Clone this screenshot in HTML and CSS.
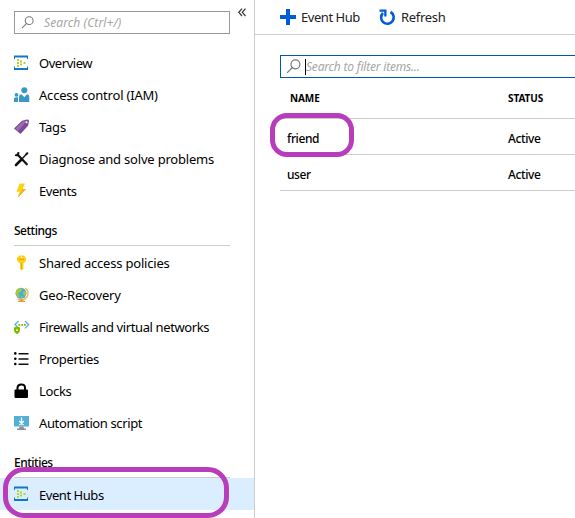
FILE: index.html
```html
<!DOCTYPE html>
<html lang="en">
<head>
<meta charset="utf-8">
<title>Event Hubs</title>
<link rel="stylesheet" href="styles.css">
</head>
<body>
<svg class="defs" width="0" height="0">
  <symbol id="hub" viewBox="0 0 16 16"><path fill="#1278c8" d="M0 .5h14v3.500h-1V2.500H1V4H0zM0 15h14v-3.500h-1V13H1v-1.500H0z"/><path fill="#b5d334" d="M3 4h2v2H3zM3 7h2v2H3zM3 10h2v2H3zM6 5.500h2v2H6zM6 8.500h2v2H6zM9.500 7h2v2h-2z"/></symbol>
  <symbol id="search" viewBox="0 0 14 14"><g fill="none" stroke="#777" stroke-width="1.100"><circle cx="8.800" cy="5" r="4.200"/><path d="M5.800 8.200 1 13"/></g></symbol>
</svg>
<div class="app">
  <aside class="sidebar">
    <div class="top">
      <div class="search"><svg class="glass" width="13" height="13"><use href="#search"/></svg><span class="t-search">Search (Ctrl+/)</span></div>
      <svg class="collapse" width="8" height="9" viewBox="0 0 8 9"><path d="M4 .7.800 4.300 4 8M7.500.7 4.300 4.300 7.500 8" fill="none" stroke="#333" stroke-width="1.200"/></svg>
    </div>
    <nav>
      <a class="item"><svg width="16" height="16"><use href="#hub"/></svg><span class="t-overview">Overview</span></a>
      <a class="item"><svg width="16" height="16" viewBox="0 0 16 16"><g fill="#3999c6"><circle cx="10.300" cy="3.300" r="3"/><path d="M5 15V9.500Q5 7.500 7.500 7.300l2.800 3 2.700-3Q15.300 7.500 15.300 9.500V15z"/><circle cx="2.500" cy="7.800" r="1.900"/><path d="M0 15v-3q0-1.800 2-1.800h2V15z"/></g></svg><span class="t-access">Access control (IAM)</span></a>
      <a class="item"><svg width="16" height="16" viewBox="0 0 16 16"><path fill="#804998" d="m0 9.500 8-7.700 5-1.300q2-.3 2 1.500l-1 4.700L6.500 15z"/><path fill="#9b6bb0" d="m1.500 9.600 7.300-7 4-1.100L4 12.300z"/><circle cx="12.500" cy="3.300" r="1" fill="#fff"/></svg><span class="t-tags">Tags</span></a>
      <a class="item"><svg width="16" height="16" viewBox="0 0 16 16"><g fill="none" stroke="#111"><path d="M3.500 3.500 12.800 13.300" stroke-width="2.200" stroke-linecap="round"/><path d="M1.200 3.800Q4.800 5.500 4.300 1.200" stroke-width="2"/><path d="M2 14 7.500 8.500" stroke-width="2.600" stroke-linecap="round"/><path d="m7.500 8.500 5-5.500" stroke-width="1.400"/><path d="m12 3.800 1.800-2.300" stroke-width="2"/></g></svg><span class="t-diagnose">Diagnose and solve problems</span></a>
      <a class="item"><svg width="16" height="16" viewBox="0 0 16 16"><path fill="#fcd116" d="M5.500.500H11L8.500 6H12L3.500 15 5.500 8.800H2.500z"/><path fill="#f9ac19" d="M8.700 6H12L3.500 15l4-7z"/></svg><span class="t-events">Events</span></a>
    </nav>
    <h2><span class="t-settings">Settings</span></h2>
    <nav>
      <a class="item"><svg width="16" height="16" viewBox="0 0 16 16"><path fill="#fcd116" d="M5 .6h5q2.500 1.900 2 4.700-.5 2-2.600 3V14L7.700 15.300 6 14V8.300Q3.500 7.400 3 5.300 2.700 2.300 5 .6z"/><path fill="#eda000" d="M5 3.800h5v1H5zM7.200 8h.8v6h-.8z"/><circle cx="7.500" cy="2.200" r=".8" fill="#fff"/></svg><span class="t-shared">Shared access policies</span></a>
      <a class="item"><svg width="16" height="16" viewBox="0 0 16 16"><circle cx="7" cy="6.300" r="5.500" fill="#46aedb"/><path fill="#a7ca3b" d="M2 4q1.500-3 4.500-3L8 3 6 5.500 4 6l1.500 3-1 1.800Q1.500 9 2 4zM9 5l3-1.500q1 3-.8 5.500L9.500 8zM7 9l2 .5-1 2z"/><path d="M11.200 1a6.400 6.400 0 0 1-7.500 10.800" fill="none" stroke="#f3b34b" stroke-width="1.300"/><path fill="#ef9b20" d="M6.500 12h2v1.300l2.500.7v1H4v-1l2.500-.7z"/></svg><span class="t-geo">Geo-Recovery</span></a>
      <a class="item"><svg width="16" height="16" viewBox="0 0 16 16"><path d="M4.500 2 1 5.500l2 2M11 2l3.700 3.700L11 9.400" fill="none" stroke="#58b4d9" stroke-width="1.300"/><path fill="#7fba00" d="M4.500 5h1.800v1.700H4.500zM7.300 5H9v1.700H7.300zM10 5h1.800v1.700H10zM0 8.500l3-1.300 3 1.300v3.300Q5.500 14 3 15.200.5 14 0 11.800z"/><path fill="#fff" d="M2.200 10.200h1.600v1.800H2.200z"/></svg><span class="t-firewalls">Firewalls and virtual networks</span></a>
      <a class="item"><svg width="16" height="16" viewBox="0 0 16 16"><path fill="#111" d="M4.500 2h10v1.500h-10zM4.500 7.300h10v1.500h-10zM4.500 12.500h10V14h-10z"/><circle cx="1.300" cy="2.400" r="1.300"/><circle cx="1.300" cy="7.700" r="1.300"/><circle cx="1.300" cy="13" r="1.300"/></svg><span class="t-properties">Properties</span></a>
      <a class="item"><svg width="16" height="16" viewBox="0 0 16 16"><path d="M3.500 7.500V5q0-3.600 3.800-3.600T11 5v2.500" fill="none" stroke="#000" stroke-width="2"/><rect x=".5" y="6.500" width="13.500" height="8.500" rx="1"/></svg><span class="t-locks">Locks</span></a>
      <a class="item"><svg width="16" height="16" viewBox="0 0 16 16"><path fill="#53b1d5" d="M0 1h15v10.500H0z"/><path d="M7.500 2.500v6M5.200 6l2.300 2.500L9.800 6" fill="none" stroke="#fff" stroke-width="1.300"/><path fill="#fff" d="M5 9.300h5v.8H5z"/><path fill="#8b9297" d="M5.500 11.500h4l.5 2h2V15H3v-1.500h2z"/></svg><span class="t-automation">Automation script</span></a>
    </nav>
    <h2 class="entities"><span class="t-entities">Entities</span></h2>
    <nav>
      <a class="item active"><svg width="16" height="16"><use href="#hub"/></svg><span class="t-hubs">Event Hubs</span></a>
    </nav>
    <div class="mark mark-nav"></div>
  </aside>
  <main>
    <div class="toolbar">
      <svg width="16" height="16" viewBox="0 0 16 16"><path fill="#015cda" d="M6 0h4v6h6v4h-6v6H6v-6H0V6h6z"/></svg><span class="t-add">Event Hub</span>
      <svg class="refresh" width="17" height="17" viewBox="0 0 17 17"><path d="M11.500 3A6.300 6.300 0 1 1 4 4" fill="none" stroke="#015cda" stroke-width="2.600"/><path fill="#015cda" d="M.5.500h7v7H5.200V2.800H.5z"/></svg><span class="t-refresh">Refresh</span>
    </div>
    <div class="filter"><svg class="glass" width="15" height="15"><use href="#search"/></svg><i class="caret"></i><span class="t-filter">Search to filter items...</span></div>
    <div class="table">
      <div class="row head"><span class="name"><span class="t-name">NAME</span></span><span class="t-status">STATUS</span></div>
      <div class="row"><span class="name"><span class="t-friend">friend</span></span><span class="t-active">Active</span></div>
      <div class="row"><span class="name"><span class="t-user">user</span></span><span class="t-active">Active</span></div>
      <div class="mark mark-row"></div>
    </div>
  </main>
</div>
</body>
</html>
```

FILE: styles.css
```css
* { box-sizing: border-box; }
body { margin: 0; background: #fff; color: #000; font: 13px/18px "Noto Sans", "Open Sans", sans-serif; overflow: hidden; }
.defs { position: absolute; }
.app { display: flex; width: 575px; height: 518px; overflow: hidden; white-space: nowrap; }
svg { flex: none; display: block; }
.sidebar { position: relative; width: 255px; flex: none; border-right: 1px solid #ccc; }
.top { display: flex; height: 47px; padding: 11px 0 0 14px; }
.search { display: flex; align-items: center; width: 216px; height: 23px; border: 1px solid #999; padding-left: 6px; color: #a6a6a6; font-style: italic; font-size: 12px; }
.search span { margin-left: 10px; letter-spacing: .1px; }
.collapse { margin: -3px 0 0 8px; }
.item { display: flex; align-items: center; height: 32px; padding-left: 14px; letter-spacing: -.2px; }
.item span { margin-left: 9px; }
.t-overview, .t-hubs, .t-events { letter-spacing: -.45px; }
.t-firewalls, .t-automation { letter-spacing: -.38px; }
.t-properties, .t-locks { letter-spacing: -.33px; }
.active { background: #dbeeff; padding-top: 2px; }
.active svg { margin-top: -2px; }
h2 { height: 39px; margin: 0 24px 1px 14px; padding-top: 15px; border-bottom: 1px solid #ccc; font-size: 12px; font-weight: 500; line-height: 18px; letter-spacing: -.5px; }
h2.entities { margin-bottom: 0; }
main { flex: 1; min-width: 0; }
.toolbar { display: flex; align-items: center; height: 35px; padding-left: 25px; border-bottom: 1px solid #ccc; color: #222; letter-spacing: -.45px; }
.toolbar span { margin-left: 5px; }
.toolbar .refresh { margin-left: 19px; }
.t-refresh { letter-spacing: -.3px; }
.filter { display: flex; align-items: center; height: 23px; margin: 20px 0 0 25px; border: 1px solid #0058ad; border-right: 0; padding-left: 5px; font-style: italic; font-size: 12px; color: #a6a6a6; letter-spacing: -.2px; }
.caret { width: 1px; height: 16px; margin-left: 4px; background: #000; }
.table { position: relative; margin-left: 25px; }
.row { display: flex; align-items: center; height: 36px; padding: 4px 0 0 7px; border-bottom: 1px solid #ccc; font-size: 12px; font-weight: 500; letter-spacing: -.4px; }
.name { width: 221px; }
.head { height: 41px; padding-top: 0; font-size: 10px; font-weight: 700; letter-spacing: -.1px; }
.head .name { padding-left: 3px; }
.mark { position: absolute; border: 5px solid #b83dba; }
.mark-nav { left: 3px; top: 467px; width: 226px; height: 51px; border-radius: 21px; }
.mark-row { left: -10px; top: 35px; width: 84px; height: 44px; border-radius: 17px; }
```
